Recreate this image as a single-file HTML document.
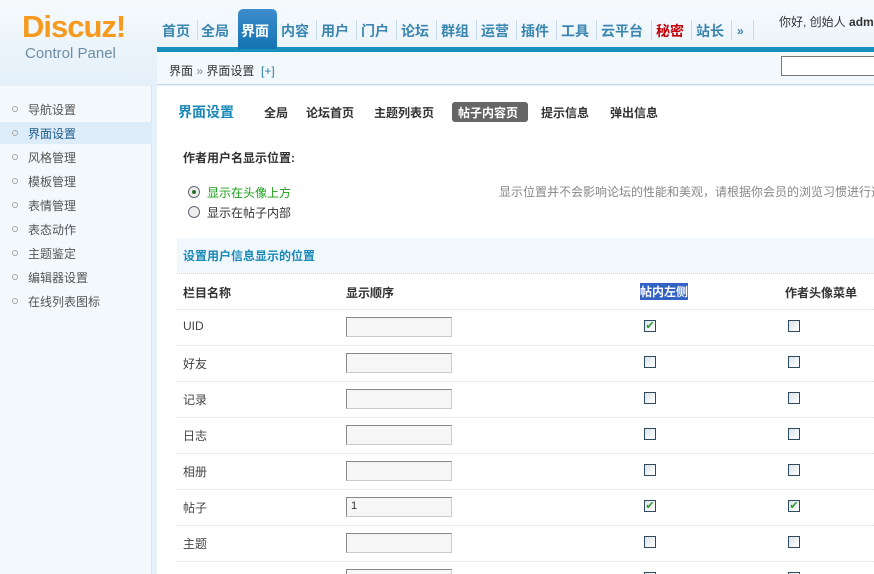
<!DOCTYPE html>
<html style="width:874px;height:574px;overflow:hidden"><head><meta charset="utf-8"><style>
*{margin:0;padding:0;box-sizing:border-box}
body{width:874px;height:574px;overflow:hidden;position:relative;background:#fff;font-family:"Liberation Sans","Noto Sans CJK SC",sans-serif;font-size:12px;color:#333}
.a{position:absolute;white-space:nowrap}
#hd{position:absolute;left:0;top:0;width:874px;height:86px;background:linear-gradient(#f6fafd,#e3eff9)}
#side{position:absolute;left:0;top:86px;width:152px;height:488px;background:#f2f8fc;border-right:1px solid #d5e4f0}
#sideb{position:absolute;left:152px;top:86px;width:5px;height:488px;background:#e4f0fa}
.nav{position:absolute;top:21px;font-size:14px;font-weight:bold;color:#3a86b0;height:20px;line-height:20px}
.sep{position:absolute;top:20px;width:1px;height:20px;background:#c8dbe8}
.si{position:absolute;left:28px;font-size:12px;color:#555}
.dot{position:absolute;left:12px;width:6px;height:6px;border:1px solid #aaa;border-radius:50%}
.tab{position:absolute;top:104px;font-size:12px;font-weight:bold;color:#333;line-height:18px}
.row{position:absolute;left:177px;width:697px;border-top:1px dotted #d8d8d8}
.inp{position:absolute;left:346px;width:106px;height:20px;border:1px solid #888;border-right-color:#ccc;border-bottom-color:#ccc;background:#f6f6f6;font-size:11px;padding:2px 4px}
.cb{position:absolute;width:12px;height:12px;border:1px solid #2d4a5e;background:linear-gradient(135deg,#dde3ea,#fff)}
.lbl{position:absolute;left:183px;font-size:12px;color:#444}
</style></head><body>
<div id="hd"></div>
<div class="a" style="left:22px;top:9px;font-size:31px;font-weight:bold;color:#f59a1e;letter-spacing:-1px">Discuz!</div>
<div class="a" style="left:25px;top:45px;font-size:15px;color:#6f8ea5">Control Panel</div>
<div class="a" style="left:157px;top:47px;width:717px;height:5px;background:#1590be"></div>
<div class="a" style="left:157px;top:52px;width:717px;height:33px;background:#f2f8fc;border-bottom:1px solid #c9dbe8"></div>
<div class="a" style="left:238px;top:9px;width:39px;height:40px;background:linear-gradient(#3f8ccb,#1373b3);border-radius:5px 5px 0 0"></div>
<div class="nav" style="left:162px">首页</div><div class="sep" style="left:197px"></div>
<div class="nav" style="left:201px">全局</div>
<div class="nav" style="left:241px;color:#fff">界面</div>
<div class="nav" style="left:281px">内容</div><div class="sep" style="left:316px"></div>
<div class="nav" style="left:321px">用户</div><div class="sep" style="left:356px"></div>
<div class="nav" style="left:361px">门户</div><div class="sep" style="left:396px"></div>
<div class="nav" style="left:401px">论坛</div><div class="sep" style="left:436px"></div>
<div class="nav" style="left:441px">群组</div><div class="sep" style="left:476px"></div>
<div class="nav" style="left:481px">运营</div><div class="sep" style="left:516px"></div>
<div class="nav" style="left:521px">插件</div><div class="sep" style="left:556px"></div>
<div class="nav" style="left:561px">工具</div><div class="sep" style="left:596px"></div>
<div class="nav" style="left:601px">云平台</div><div class="sep" style="left:651px"></div>
<div class="nav" style="left:656px;color:#c4000a">秘密</div><div class="sep" style="left:691px"></div>
<div class="nav" style="left:696px">站长</div><div class="sep" style="left:731px"></div>
<div class="nav" style="left:737px;font-size:12px">»</div><div class="sep" style="left:753px"></div>
<div class="a" style="left:779px;top:13px;font-size:12px;color:#333">你好, 创始人 <b>admin</b></div>
<div class="a" style="left:169px;top:62px;font-size:12px;color:#333">界面 <span style="color:#888">»</span> 界面设置 <span style="color:#2b7fae">&nbsp;[+]</span></div>
<div class="a" style="left:781px;top:56px;width:100px;height:20px;border:1px solid #777;border-right:none;background:#fff"></div>

<div id="side"></div><div id="sideb"></div>
<div class="a" style="left:0;top:122px;width:152px;height:22px;background:#dcecf8"></div>
<div class="dot" style="top:106px"></div><div class="si" style="top:101px">导航设置</div>
<div class="dot" style="top:130px"></div><div class="si" style="top:125px;color:#1e5c8c">界面设置</div>
<div class="dot" style="top:154px"></div><div class="si" style="top:149px">风格管理</div>
<div class="dot" style="top:178px"></div><div class="si" style="top:173px">模板管理</div>
<div class="dot" style="top:202px"></div><div class="si" style="top:197px">表情管理</div>
<div class="dot" style="top:226px"></div><div class="si" style="top:221px">表态动作</div>
<div class="dot" style="top:250px"></div><div class="si" style="top:245px">主题鉴定</div>
<div class="dot" style="top:274px"></div><div class="si" style="top:269px">编辑器设置</div>
<div class="dot" style="top:298px"></div><div class="si" style="top:293px">在线列表图标</div>

<div class="a" style="left:178px;top:102px;font-size:14px;font-weight:bold;color:#1a89b8">界面设置</div>
<div class="tab" style="left:264px">全局</div>
<div class="tab" style="left:306px">论坛首页</div>
<div class="tab" style="left:374px">主题列表页</div>
<div class="a" style="left:452px;top:102px;width:76px;height:20px;background:#666;border-radius:3px"></div>
<div class="tab" style="left:458px;color:#fff">帖子内容页</div>
<div class="tab" style="left:541px">提示信息</div>
<div class="tab" style="left:610px">弹出信息</div>

<div class="a" style="left:183px;top:149px;font-weight:bold;color:#333">作者用户名显示位置:</div>
<div class="a" style="left:188px;top:186px;width:12px;height:12px;border:1px solid #667;border-radius:50%;background:#eee"><div style="position:absolute;left:3px;top:3px;width:4px;height:4px;border-radius:50%;background:#2a6a2a"></div></div>
<div class="a" style="left:207px;top:184px;color:#1aa01a">显示在头像上方</div>
<div class="a" style="left:188px;top:206px;width:12px;height:12px;border:1px solid #667;border-radius:50%;background:#eee"></div>
<div class="a" style="left:207px;top:204px;color:#333">显示在帖子内部</div>
<div class="a" style="left:499px;top:183px;color:#888">显示位置并不会影响论坛的性能和美观，请根据你会员的浏览习惯进行选择</div>

<div class="a" style="left:177px;top:238px;width:697px;height:35px;background:#f0f7fd"></div>
<div class="a" style="left:183px;top:247px;font-weight:bold;color:#1a89b8">设置用户信息显示的位置</div>
<div class="row" style="top:273px"></div>
<div class="a" style="left:183px;top:284px;font-weight:bold">栏目名称</div>
<div class="a" style="left:346px;top:284px;font-weight:bold">显示顺序</div>
<div class="a" style="left:640px;top:283px;font-weight:bold;color:#fff;background:#3162c4">帖内左侧</div>
<div class="a" style="left:785px;top:284px;font-weight:bold">作者头像菜单</div>

<div class="row" style="top:309px"></div><div class="lbl" style="top:319px">UID</div><div class="inp" style="top:317px"></div><div class="cb" style="left:644px;top:320px;color:#2a9a2a;font-size:11px;line-height:10px;text-align:center">✔</div><div class="cb" style="left:788px;top:320px"></div>
<div class="row" style="top:345px"></div><div class="lbl" style="top:355px">好友</div><div class="inp" style="top:353px"></div><div class="cb" style="left:644px;top:356px"></div><div class="cb" style="left:788px;top:356px"></div>
<div class="row" style="top:381px"></div><div class="lbl" style="top:391px">记录</div><div class="inp" style="top:389px"></div><div class="cb" style="left:644px;top:392px"></div><div class="cb" style="left:788px;top:392px"></div>
<div class="row" style="top:417px"></div><div class="lbl" style="top:427px">日志</div><div class="inp" style="top:425px"></div><div class="cb" style="left:644px;top:428px"></div><div class="cb" style="left:788px;top:428px"></div>
<div class="row" style="top:453px"></div><div class="lbl" style="top:463px">相册</div><div class="inp" style="top:461px"></div><div class="cb" style="left:644px;top:464px"></div><div class="cb" style="left:788px;top:464px"></div>
<div class="row" style="top:489px"></div><div class="lbl" style="top:499px">帖子</div><div class="inp" style="top:497px">1</div><div class="cb" style="left:644px;top:500px;color:#2a9a2a;font-size:11px;line-height:10px;text-align:center">✔</div><div class="cb" style="left:788px;top:500px;color:#2a9a2a;font-size:11px;line-height:10px;text-align:center">✔</div>
<div class="row" style="top:525px"></div><div class="lbl" style="top:535px">主题</div><div class="inp" style="top:533px"></div><div class="cb" style="left:644px;top:536px"></div><div class="cb" style="left:788px;top:536px"></div>
<div class="row" style="top:561px"></div><div class="inp" style="top:569px;height:5px"></div><div class="cb" style="left:644px;top:572px;height:2px;border-bottom:none"></div><div class="cb" style="left:788px;top:572px;height:2px;border-bottom:none"></div>
</body></html>
